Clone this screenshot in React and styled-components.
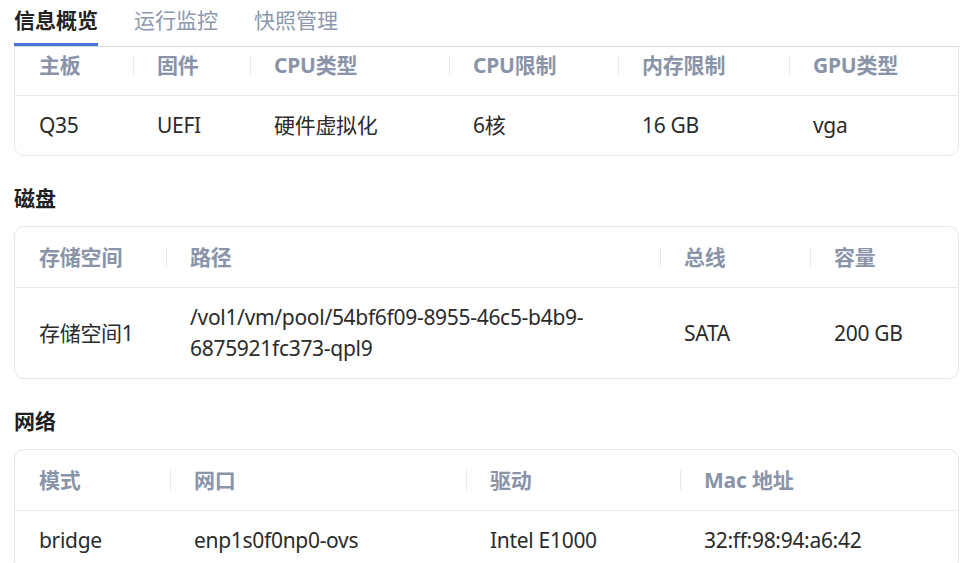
import React, { useLayoutEffect, useRef } from "react";
import styled, { createGlobalStyle } from "styled-components";

const Global = createGlobalStyle`
  html, body { margin: 0; padding: 0; background: #fff; }
  body {
    font-family: "Segoe UI", "Noto Sans", "Noto Sans CJK SC", sans-serif;
    color: #262626;
  }
  * { box-sizing: border-box; }
`;

const Viewport = styled.div`
  height: 100vh;
  overflow-y: auto;
  scrollbar-width: none;
  padding: 0 6px 0 14px;
  &::-webkit-scrollbar { display: none; }
`;

const TabBar = styled.div`
  position: sticky;
  top: 0;
  z-index: 2;
  background: #fff;
  display: flex;
  gap: 36px;
  border-bottom: 1px solid #d3d9e5;
`;

const Tab = styled.div`
  font-size: 21px;
  line-height: 30px;
  padding: 5px 0 8px;
  border-bottom: 3px solid ${(p) => (p.$active ? "#4b73d8" : "transparent")};
  color: ${(p) => (p.$active ? "#222" : "#8e98ac")};
  font-weight: ${(p) => (p.$active ? 600 : 400)};
  cursor: pointer;
`;

const Content = styled.div`
  padding-top: 16px;
  padding-bottom: 40px;
`;

const Section = styled.section`
  & + & { margin-top: 28px; }
`;

const Title = styled.h3`
  margin: 0 0 14px;
  font-size: 21px;
  line-height: 28px;
  font-weight: 700;
  color: #1f1f1f;
`;

const Card = styled.div`
  border: 1px solid #e3e8ef;
  border-radius: 10px;
  overflow: hidden;
  background: #fff;
`;

const Row = styled.div`
  display: grid;
  grid-template-columns: ${(p) => p.$cols};
  & + & { border-top: 1px solid #e6eaf0; }
`;

const HeadCell = styled.div`
  position: relative;
  padding: 14px 24px;
  font-size: 21px;
  line-height: 32px;
  font-weight: 700;
  color: #8a94a9;
  white-space: nowrap;
  letter-spacing: -0.2px;
  & + &::before {
    content: "";
    position: absolute;
    left: 0;
    top: 50%;
    width: 1px;
    height: 20px;
    transform: translateY(-50%);
    background: #e6e9ef;
  }
`;

const Cell = styled.div`
  padding: 14px 24px;
  font-size: 21px;
  line-height: 31px;
  color: #2b2b2b;
  letter-spacing: -0.3px;
  display: flex;
  align-items: center;
  overflow-wrap: anywhere;
`;

function InfoTable({ cols, heads, rows }) {
  return (
    <Card>
      <Row $cols={cols}>
        {heads.map((h) => (
          <HeadCell key={h}>{h}</HeadCell>
        ))}
      </Row>
      {rows.map((r, i) => (
        <Row $cols={cols} key={i}>
          {r.map((c, j) => (
            <Cell key={j}>{c}</Cell>
          ))}
        </Row>
      ))}
    </Card>
  );
}

export default function App() {
  const ref = useRef(null);
  useLayoutEffect(() => {
    if (ref.current) ref.current.scrollTop = 29;
  }, []);

  return (
    <>
      <Global />
      <Viewport ref={ref}>
        <TabBar>
          <Tab $active>信息概览</Tab>
          <Tab>运行监控</Tab>
          <Tab>快照管理</Tab>
        </TabBar>
        <Content>
          <Section>
            <InfoTable
              cols="118px 117px 199px 169px 171px 1fr"
              heads={["主板", "固件", "CPU类型", "CPU限制", "内存限制", "GPU类型"]}
              rows={[["Q35", "UEFI", "硬件虚拟化", "6核", "16 GB", "vga"]]}
            />
          </Section>
          <Section>
            <Title>磁盘</Title>
            <InfoTable
              cols="151px 494px 150px 1fr"
              heads={["存储空间", "路径", "总线", "容量"]}
              rows={[
                [
                  "存储空间1",
                  "/vol1/vm/pool/54bf6f09-8955-46c5-b4b9-6875921fc373-qpl9",
                  "SATA",
                  "200 GB",
                ],
              ]}
            />
          </Section>
          <Section>
            <Title>网络</Title>
            <InfoTable
              cols="155px 296px 214px 1fr"
              heads={["模式", "网口", "驱动", "Mac 地址"]}
              rows={[["bridge", "enp1s0f0np0-ovs", "Intel E1000", "32:ff:98:94:a6:42"]]}
            />
          </Section>
        </Content>
      </Viewport>
    </>
  );
}
